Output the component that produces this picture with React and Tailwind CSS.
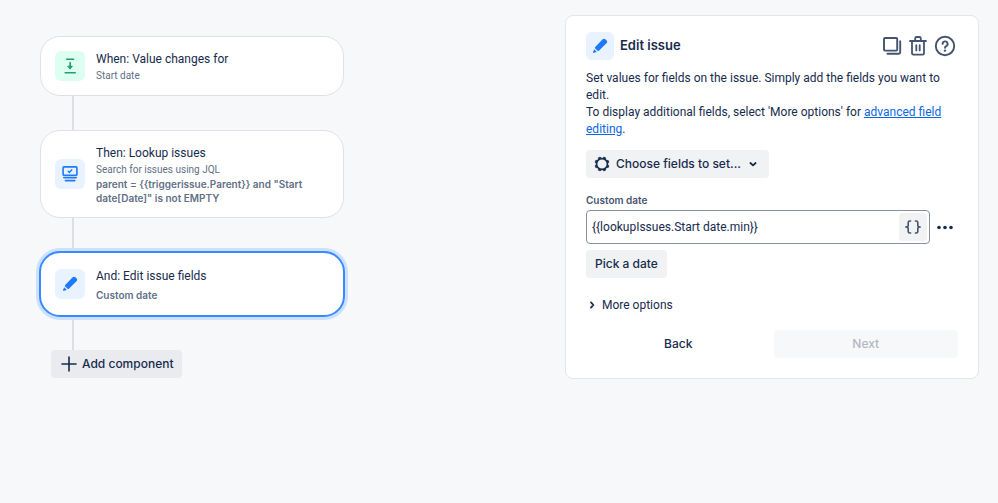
import React, { useState } from 'react';

function DownloadIcon() {
  return (
    <svg className="w-4 h-4" viewBox="0 0 16 16" fill="none" stroke="#22a06b" strokeWidth="1.6" strokeLinecap="round">
      <path d="M4.6 1.2h7M3.2 14.8h10" />
      <path d="M8.2 4.6v4" />
      <path d="M6.1 8.2h4.2l-2.1 2.6z" fill="#22a06b" strokeWidth="1" strokeLinejoin="round" />
    </svg>
  );
}

function LookupIcon() {
  return (
    <svg className="w-4 h-4" viewBox="0 0 16 16" fill="none" stroke="#1d7afc" strokeLinecap="round">
      <rect x="1.1" y="0.9" width="13.8" height="8.4" rx="0.8" strokeWidth="1.6" />
      <path d="M6.2 5.2l1.2 1.2 2.4-2.6" strokeWidth="1.4" />
      <path d="M1.8 11.6h12.4M3.4 14.6h9.4" strokeWidth="1.6" />
    </svg>
  );
}

function PencilIcon() {
  return (
    <svg className="w-4 h-4" viewBox="0 0 16 16" fill="#1d7afc">
      <path d="M9.9 2 11.1 1.1a1.7 1.7 0 0 1 2.2.1l1.4 1.4a1.7 1.7 0 0 1 .1 2.3L13.7 6 6.9 12.7a1 1 0 0 1-1.3.1L3.2 10.4a1 1 0 0 1 0-1.4z" />
      <path d="M2.2 11.2 4.9 13.9 1.9 14.8a.7.7 0 0 1-.9-.9z" />
    </svg>
  );
}

function CopyIcon() {
  return (
    <svg className="w-5 h-5" viewBox="0 0 20 20" fill="none" stroke="currentColor" strokeWidth="1.9" strokeLinejoin="round" strokeLinecap="round">
      <rect x="2" y="2" width="13.2" height="12.6" rx="1" />
      <path d="M5.4 17.8H17a1.2 1.2 0 0 0 1.2-1.2V5.2" />
    </svg>
  );
}

function TrashIcon() {
  return (
    <svg className="w-5 h-5" viewBox="0 0 20 20" fill="none" stroke="currentColor" strokeWidth="1.8" strokeLinejoin="round" strokeLinecap="round">
      <path d="M2 5h16M7.2 5V2.4A1.4 1.4 0 0 1 8.6 1h2.8a1.4 1.4 0 0 1 1.4 1.4V5" />
      <path d="M4 5v12a1.6 1.6 0 0 0 1.6 1.6h8.8A1.6 1.6 0 0 0 16 17V5" />
      <path d="M8.3 9.2v5.2M11.7 9.2v5.2" />
    </svg>
  );
}

function HelpIcon() {
  return (
    <svg className="w-[22px] h-[22px]" viewBox="0 0 22 22" fill="none" stroke="currentColor" strokeWidth="1.9" strokeLinecap="round" strokeLinejoin="round">
      <circle cx="11" cy="11" r="9.2" />
      <path d="M8.6 8.9a2.5 2.5 0 1 1 3.6 2.2c-.8.4-1.2.8-1.2 1.7" />
      <circle cx="11" cy="15.6" r="1.2" fill="currentColor" stroke="none" />
    </svg>
  );
}

function GearIcon() {
  const teeth = [0, 45, 90, 135, 180, 225, 270, 315];
  return (
    <svg className="w-4 h-4" viewBox="0 0 16 16" fill="none" stroke="currentColor">
      <circle cx="8" cy="8" r="5.4" strokeWidth="1.6" />
      {teeth.map((angle) => (
        <path key={angle} d="M6.6 2.2 7 .9h2l.4 1.3z" fill="currentColor" strokeWidth="0.6" strokeLinejoin="round" transform={`rotate(${angle + 22.5} 8 8)`} />
      ))}
    </svg>
  );
}

function Connector() {
  return <div className="w-0.5 h-[34px] ml-8 bg-[#dcdfe4]" />;
}

function StepCard({ icon, iconClass, title, selected, onSelect, children }) {
  return (
    <button
      type="button"
      aria-pressed={selected}
      onClick={onSelect}
      className={`flex items-center w-full gap-[11px] bg-white rounded-[20px] text-left ${
        selected
          ? 'px-[15px] py-3.5 outline-2 outline-[#388bff] -outline-offset-1 ring-4 ring-[#cce0ff]'
          : 'px-3.5 py-3 border border-[#dfe1e5]'
      }`}
    >
      <span className={`flex items-center justify-center shrink-0 w-[30px] h-[30px] rounded-md ${iconClass}`}>{icon}</span>
      <span className="flex flex-col min-w-0">
        <span className="text-xs leading-5 text-[#172b4d]">{title}</span>
        {children}
      </span>
    </button>
  );
}

function RuleChain() {
  const [selected, setSelected] = useState('edit');

  return (
    <section className="w-full max-w-[304px] pt-[21px]">
      <StepCard
        icon={<DownloadIcon />}
        iconClass="bg-[#dcfff1]"
        title="When: Value changes for"
        selected={selected === 'trigger'}
        onSelect={() => setSelected('trigger')}
      >
        <span className="text-[10px] leading-[14px] text-[#626f86]">Start date</span>
      </StepCard>
      <Connector />
      <StepCard
        icon={<LookupIcon />}
        iconClass="bg-[#e9f2ff]"
        title="Then: Lookup issues"
        selected={selected === 'lookup'}
        onSelect={() => setSelected('lookup')}
      >
        <span className="text-[10px] leading-[14px] text-[#626f86]">Search for issues using JQL</span>
        <span className="text-[10px] leading-[14px] font-['Inter',sans-serif] font-semibold text-[#626f86]">
          {'parent = {{triggerissue.Parent}} and "Start date[Date]" is not EMPTY'}
        </span>
      </StepCard>
      <Connector />
      <StepCard
        icon={<PencilIcon />}
        iconClass="bg-[#e9f2ff]"
        title="And: Edit issue fields"
        selected={selected === 'edit'}
        onSelect={() => setSelected('edit')}
      >
        <span className="pt-0.5 text-[10px] leading-[14px] font-['Inter',sans-serif] font-semibold text-[#626f86]">Custom date</span>
      </StepCard>
      <Connector />
      <button type="button" className="flex items-center gap-[5px] h-7 ml-[11px] pl-2.5 pr-2 rounded-sm bg-[#e9ebee] font-['Inter',sans-serif] text-xs font-medium hover:bg-[#dcdfe4]">
        <svg className="w-4 h-4" viewBox="0 0 16 16" fill="none" stroke="currentColor" strokeWidth="1.6" strokeLinecap="round">
          <path d="M8 1v14M1 8h14" />
        </svg>
        Add component
      </button>
    </section>
  );
}

function EditPanel() {
  const [value, setValue] = useState('{{lookupIssues.Start date.min}}');
  const [open, setOpen] = useState(false);

  return (
    <section className="w-full max-w-[414px] bg-white border border-[#e4e6ea] rounded-lg px-5 pt-4 pb-5">
      <header className="flex items-center gap-1.5">
        <span className="flex items-center justify-center w-7 h-7 rounded-md bg-[#e9f2ff]">
          <PencilIcon />
        </span>
        <h1 className="flex-1 font-['Inter',sans-serif] text-[13px] font-semibold">Edit issue</h1>
        <div className="flex items-center gap-1.5 pr-0.5 text-[#44546f]">
          <button type="button" aria-label="Duplicate"><CopyIcon /></button>
          <button type="button" aria-label="Delete"><TrashIcon /></button>
          <button type="button" aria-label="Help"><HelpIcon /></button>
        </div>
      </header>

      <div className="pt-2.5 text-xs leading-[17px]">
        <p>Set values for fields on the issue. Simply add the fields you want to edit.</p>
        <p>
          To display additional fields, select 'More options' for{' '}
          <a href="#advanced" className="text-[#0c66e4] underline">advanced field editing</a>.
        </p>
      </div>

      <button type="button" className="flex items-center gap-1.5 h-7 mt-3 pl-2 pr-2.5 rounded-sm bg-[#f1f2f4] font-['Inter',sans-serif] text-xs font-medium hover:bg-[#e4e6ea]">
        <GearIcon />
        Choose fields to set...
        <svg className="w-3 h-3" viewBox="2 2 12 12" fill="none" stroke="currentColor" strokeWidth="1.8" strokeLinecap="round" strokeLinejoin="round">
          <path d="M5.4 7 8 9.4 10.6 7" />
        </svg>
      </button>

      <label htmlFor="custom-date" className="block pt-3.5 pb-0.5 font-['Inter',sans-serif] text-[10px] leading-4 font-semibold text-[#44546f]">
        Custom date
      </label>
      <div className="flex items-center gap-1.5">
        <div className="flex items-center flex-1 min-w-0 h-[34px] pl-[5px] pr-0.5 border border-[#8590a2] rounded-sm">
          <input
            id="custom-date"
            type="text"
            value={value}
            onChange={(e) => setValue(e.target.value)}
            className="flex-1 min-w-0 text-xs outline-none"
          />
          <button type="button" aria-label="Smart values" className="flex items-center justify-center w-7 h-7 rounded-sm bg-[#f1f2f4] text-[#44546f]">
            <svg className="w-[18px] h-4" viewBox="0 0 18 16" fill="none" stroke="currentColor" strokeWidth="1.6" strokeLinecap="round" strokeLinejoin="round">
              <path d="M6.6 2H5.8A1.6 1.6 0 0 0 4.2 3.6V6.4Q4.2 8 1.8 8Q4.2 8 4.2 9.6V12.4A1.6 1.6 0 0 0 5.8 14H6.6" />
              <path d="M11.4 2h.8a1.6 1.6 0 0 1 1.6 1.6V6.4Q13.8 8 16.2 8Q13.8 8 13.8 9.6V12.4A1.6 1.6 0 0 1 12.2 14H11.4" />
            </svg>
          </button>
        </div>
        <button type="button" aria-label="Field options" className="pr-1">
          <svg className="w-[18px] h-4" viewBox="0 0 18 16" fill="currentColor">
            <circle cx="3" cy="8.5" r="1.8" />
            <circle cx="9" cy="8.5" r="1.8" />
            <circle cx="15" cy="8.5" r="1.8" />
          </svg>
        </button>
      </div>
      <button type="button" className="h-7 mt-1.5 px-[9px] rounded-sm bg-[#f1f2f4] font-['Inter',sans-serif] text-xs font-medium hover:bg-[#e4e6ea]">
        Pick a date
      </button>

      <div className="mt-[18px]">
        <button type="button" aria-expanded={open} onClick={() => setOpen(!open)} className="flex items-center text-xs leading-[18px]">
          <svg className={`w-4 h-4 ${open ? 'rotate-90' : ''}`} viewBox="0 0 16 16" fill="none" stroke="currentColor" strokeWidth="1.8" strokeLinecap="round" strokeLinejoin="round">
            <path d="M5 5.4 7.4 8 5 10.6" />
          </svg>
          More options
        </button>
      </div>

      <div className="grid grid-cols-2 gap-[3px] mt-4 font-['Inter',sans-serif]">
        <button type="button" className="h-7 rounded-sm text-xs font-medium hover:bg-[#f1f2f4]">Back</button>
        <button type="button" disabled className="h-7 rounded-sm text-xs font-medium bg-[#f7f8f9] text-[#b3b9c4]">Next</button>
      </div>
    </section>
  );
}

export default function App() {
  return (
    <main className="flex items-start justify-between gap-8 min-h-screen pt-[15px] pb-8 pl-10 pr-[19px] bg-[#f7f8f9] text-[#172b4d] font-['Roboto','Liberation_Sans',sans-serif]">
      <RuleChain />
      <EditPanel />
    </main>
  );
}
